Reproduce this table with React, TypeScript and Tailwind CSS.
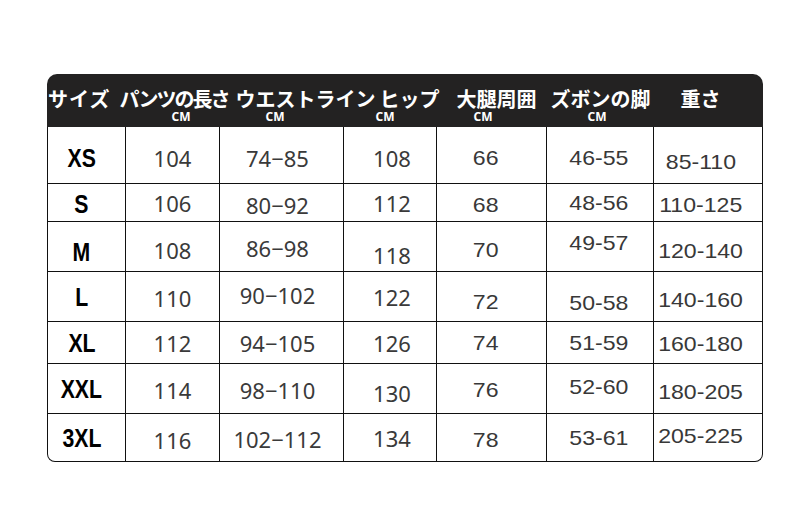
import React from "react";

const COLS = "grid grid-cols-[78px_94px_124px_93px_110px_107px_110px]";

type Row = {
  size: string;
  h: string;
  vals: string[];
  dy: string[];
};

const rows: Row[] = [
  { size: "XS", h: "h-[57px]", vals: ["104", "74−85", "108", "66", "46-55", "85-110"], dy: ["pt-[6px]", "pt-[5px]", "pt-[5px]", "pt-[5px]", "pt-[5px]", "pt-[6px]", "pt-[13px]"] },
  { size: "S", h: "h-[38px]", vals: ["106", "80−92", "112", "68", "48-56", "110-125"], dy: ["pt-[2px]", "pt-[1px]", "pt-[4px]", "pt-[1px]", "pt-[4px]", "", "pt-[4px]"] },
  { size: "M", h: "h-[50px]", vals: ["108", "86−98", "118", "70", "49-57", "120-140"], dy: ["pt-[10px]", "pt-[6px]", "pt-[2px]", "pt-[16px]", "pt-[6px]", "pb-[8px]", "pt-[8px]"] },
  { size: "L", h: "h-[50px]", vals: ["110", "90−102", "122", "72", "50-58", "140-160"], dy: ["", "pt-[2px]", "pb-[4px]", "", "pt-[10px]", "pt-[12px]", "pt-[6px]"] },
  { size: "XL", h: "h-[42px]", vals: ["112", "94−105", "126", "74", "51-59", "160-180"], dy: ["", "", "", "", "", "", "pt-[2px]"] },
  { size: "XXL", h: "h-[50px]", vals: ["114", "98−110", "130", "76", "52-60", "180-205"], dy: ["", "pt-[2px]", "pt-[2px]", "pt-[8px]", "pt-[2px]", "pb-[4px]", "pt-[6px]"] },
  { size: "3XL", h: "h-[47px]", vals: ["116", "102−112", "134", "78", "53-61", "205-225"], dy: ["", "pt-[4px]", "pt-[2px]", "", "pt-[4px]", "", "pb-[4px]"] },
];

const cellX = ["pr-[10px]", "", "pr-[8px]", "pl-[4px]", "pr-[12px]", "pr-[2px]", "pr-[16px]"];

export default function App() {
  return (
    <div className="w-[800px] h-[520px] bg-white pt-[74px] pl-[47px]">
      <div className="w-[716px]">
        {/* header */}
        <div className="h-[53px] bg-[#232222] rounded-t-[10px] flex flex-col pt-[15px]">
          <div
            className="flex text-white text-[20px] leading-[20px] font-bold whitespace-nowrap"
            style={{ fontFamily: '"Noto Sans CJK JP", "Noto Sans CJK SC", sans-serif' }}
          >
            <span className="ml-[1px] shrink-0 tracking-[1px]">サイズ</span>
            <span className="ml-[9px] shrink-0 tracking-[-2px]">パンツの長さ</span>
            <span className="ml-[7px] shrink-0">ウエストライン</span>
            <span className="ml-[4px] shrink-0">ヒップ</span>
            <span className="ml-[17px] shrink-0">大腿周囲</span>
            <span className="ml-[14px] shrink-0">ズボンの脚</span>
            <span className="ml-[30px] shrink-0">重さ</span>
          </div>
          <div
            className="flex mt-[2px] text-white text-[12px] leading-[12px] font-bold"
            style={{ fontFamily: '"Noto Sans", "DejaVu Sans", sans-serif' }}
          >
            <span className="ml-[114px] w-[40px] text-center">CM</span>
            <span className="ml-[54px] w-[40px] text-center">CM</span>
            <span className="ml-[70px] w-[40px] text-center">CM</span>
            <span className="ml-[58px] w-[40px] text-center">CM</span>
            <span className="ml-[74px] w-[40px] text-center">CM</span>
          </div>
        </div>
        {/* body */}
        <div className="border-l border-r border-b border-[#111] rounded-b-[8px] overflow-hidden">
          {rows.map((r, ri) => (
            <div
              key={r.size}
              className={`${COLS} ${r.h} ${ri < rows.length - 1 ? "border-b border-[#111]" : ""}`}
            >
              {[r.size, ...r.vals].map((v, ci) => {
                const base = `flex items-center justify-center ${ci < 6 ? "border-r border-[#111]" : ""} ${cellX[ci]} ${r.dy[ci]}`;
                if (ci === 0) {
                  return (
                    <div key={ci} className={base}>
                      <span
                        className="inline-block scale-x-[0.85] text-[25px] leading-[26px] font-bold text-black"
                        style={{ fontFamily: '"Liberation Sans", Arial, sans-serif' }}
                      >
                        {v}
                      </span>
                    </div>
                  );
                }
                if (ci <= 3) {
                  return (
                    <div key={ci} className={base}>
                      <span
                        className="text-[22px] leading-[24px] text-[#3a3a3a]"
                        style={{ fontFamily: '"Noto Sans", sans-serif' }}
                      >
                        {v}
                      </span>
                    </div>
                  );
                }
                return (
                  <div key={ci} className={base}>
                    <span
                      className="inline-block scale-x-[1.1] text-[21px] leading-[24px] text-[#383838]"
                      style={{ fontFamily: '"Liberation Sans", Arial, sans-serif' }}
                    >
                      {v}
                    </span>
                  </div>
                );
              })}
            </div>
          ))}
        </div>
      </div>
    </div>
  );
}
